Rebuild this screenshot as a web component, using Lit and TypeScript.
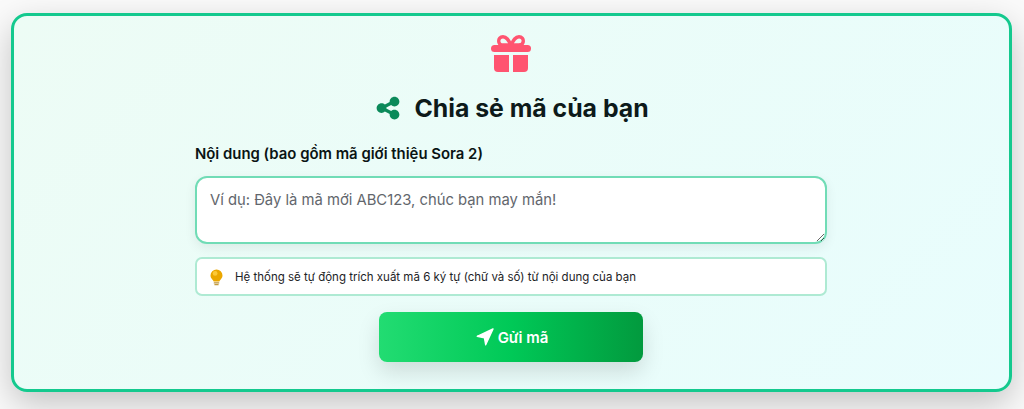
import { LitElement, html, css } from "lit";
import { customElement } from "lit/decorators.js";

@customElement("app-root")
export class AppRoot extends LitElement {
  static styles = css`
    :host {
      display: block;
      width: 1024px;
      height: 409px;
      overflow: hidden;
      background: #fafafa;
      font-family: Inter, "Noto Sans", sans-serif;
    }
    .page {
      height: 409px;
      box-sizing: border-box;
      padding: 13px 12px 17px 11px;
    }
    .card {
      box-sizing: border-box;
      height: 379px;
      border: 3px solid #14c98e;
      border-radius: 16px;
      background: linear-gradient(135deg, #edfcf5 0%, #e8fdfd 100%);
      box-shadow: 0 12px 34px rgba(0, 0, 0, 0.22);
      padding: 19px 182px 0 181px;
      display: flex;
      flex-direction: column;
      align-items: center;
    }
    .gift {
      width: 40px;
      height: 37px;
      display: block;
    }
    .title {
      margin: 19px 0 0 2px;
      display: flex;
      align-items: center;
      gap: 13px;
      height: 34px;
      font-size: 24.8px;
      line-height: 34px;
      font-weight: 700;
      color: #0d1a1a;
    }
    .title svg {
      width: 26px;
      height: 26px;
      fill: #0b8a5a;
    }
    .label {
      align-self: stretch;
      margin-top: 19px;
      font-size: 14.9px;
      line-height: 20px;
      font-weight: 600;
      color: #0a1414;
    }
    textarea {
      display: block;
      box-sizing: border-box;
      width: 100%;
      height: 68px;
      margin: 12px 0 0;
      padding: 10px 13px;
      border: 2px solid #71dcb6;
      border-radius: 12px;
      background: #fff;
      box-shadow: 0 4px 12px rgba(0, 0, 0, 0.07);
      font-family: inherit;
      font-size: 14.8px;
      line-height: 24px;
      color: #222;
      outline: none;
    }
    textarea::placeholder {
      color: #62666c;
      opacity: 1;
    }
    .hint {
      box-sizing: border-box;
      width: 100%;
      height: 39px;
      margin-top: 13px;
      padding: 0 12px;
      display: flex;
      align-items: center;
      gap: 12px;
      border: 2px solid #aeead3;
      border-radius: 7px;
      background: #fff;
      font-size: 11.5px;
      color: #1d2326;
    }
    .hint svg {
      width: 14px;
      height: 18px;
      flex: none;
    }
    button {
      box-sizing: border-box;
      width: 264px;
      height: 50px;
      margin-top: 16px;
      padding: 0 0 0 2px;
      border: none;
      border-radius: 8px;
      background: linear-gradient(90deg, #22dc72 0%, #00c957 50%, #029a3e 100%);
      box-shadow: 0 10px 22px rgba(0, 0, 0, 0.13);
      color: #fff;
      font-family: inherit;
      font-size: 15px;
      font-weight: 600;
      display: flex;
      align-items: center;
      justify-content: center;
      gap: 4px;
    }
    button svg {
      width: 18px;
      height: 18px;
      fill: #fff;
      stroke: #fff;
      stroke-width: 1.4;
      stroke-linejoin: round;
    }
  `;

  render() {
    return html`
      <div class="page">
        <div class="card">
          <svg class="gift" viewBox="0 0 40 37" aria-hidden="true">
            <g fill="none" stroke="#ff5470" stroke-width="3.4">
              <path d="M20 10 C17.500 5 15.500 1.700 12 1.700 C9 1.700 7.700 4 7.700 6 C7.700 9 10 10 12 10 Z" />
              <path d="M20 10 C22.500 5 24.500 1.700 28 1.700 C31 1.700 32.300 4 32.300 6 C32.300 9 30 10 28 10 Z" />
            </g>
            <g fill="#ff5470">
              <rect x="0" y="10" width="40" height="7" rx="3.5" />
              <path d="M3 20 H18 V37 H7 Q3 37 3 33 Z" />
              <path d="M22 20 H37 V33 Q37 37 33 37 H22 Z" />
            </g>
          </svg>
          <h1 class="title">
            <svg viewBox="0 0 448 512" aria-hidden="true">
              <path d="M352 224c53 0 96-43 96-96s-43-96-96-96s-96 43-96 96c0 4 .2 8 .7 11.9l-94.1 47C145.4 170.2 121.9 160 96 160c-53 0-96 43-96 96s43 96 96 96c25.9 0 49.4-10.2 66.6-26.9l94.1 47c-.5 3.9-.7 7.8-.7 11.9c0 53 43 96 96 96s96-43 96-96s-43-96-96-96c-25.9 0-49.4 10.2-66.6 26.9l-94.1-47c.5-3.9 .7-7.8 .7-11.9s-.2-8-.7-11.9l94.1-47C302.6 213.8 326.1 224 352 224z" />
            </svg>
            <span>Chia sẻ mã của bạn</span>
          </h1>
          <div class="label">Nội dung (bao gồm mã giới thiệu Sora 2)</div>
          <textarea placeholder="Ví dụ: Đây là mã mới ABC123, chúc bạn may mắn!"></textarea>
          <div class="hint">
            <svg viewBox="0 0 14 18" aria-hidden="true">
              <g transform="translate(1.500 0)">
                <path fill="#eba700" d="M6 1.5a6 6 0 0 1 6 6c0 2.2-1.2 3.3-2.2 4.4-.5.6-.8 1-.9 1.6H3.100c-.1-.6-.4-1-.9-1.600C1.200 10.800 0 9.700 0 7.500a6 6 0 0 1 6-6z" />
                <circle cx="4.600" cy="5.400" r="2.400" fill="#fcc937" />
                <rect x="3.200" y="14.200" width="5.600" height="1.300" rx=".6" fill="#b9913a" />
                <rect x="3.800" y="16" width="4.400" height="1.300" rx=".6" fill="#c49a3c" />
              </g>
            </svg>
            <span>Hệ thống sẽ tự động trích xuất mã 6 ký tự (chữ và số) từ nội dung của bạn</span>
          </div>
          <button>
            <svg viewBox="0 0 18 18" aria-hidden="true">
              <path d="M17 1 L1.200 8.300 L8.400 9.700 L9.700 16.800 Z" />
            </svg>
            <span>Gửi mã</span>
          </button>
        </div>
      </div>
    `;
  }
}
